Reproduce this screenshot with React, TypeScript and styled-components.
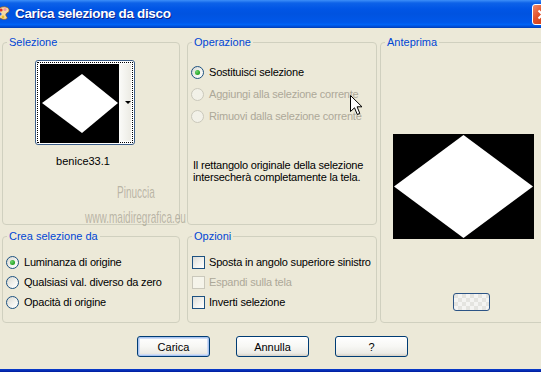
import React from "react";
import styled, { createGlobalStyle } from "styled-components";

const GlobalStyle = createGlobalStyle`
  html, body {
    margin: 0;
    padding: 0;
    background: #ece9d8;
  }
  body {
    font-family: "Liberation Sans", Arial, sans-serif;
    font-size: 11px;
    color: #000;
  }
`;

// finestra XP
const Window = styled.div`
  width: 541px;
  height: 372px;
  overflow: hidden;
  position: relative;
  background: #ece9d8;
  display: flex;
  flex-direction: column;
`;

const TitleBar = styled.div`
  height: 28px;
  flex: none;
  display: flex;
  align-items: center;
  background: linear-gradient(
    to bottom,
    #3d8ff8 0px,
    #0d62e8 3px,
    #0055e5 9px,
    #0053e0 50%,
    #0058ea 80%,
    #0063f5 88%,
    #0050dc 94%,
    #003eb4 100%
  );
`;

const TitleIcon = styled.svg`
  margin-left: -5px;
  margin-top: -2px;
  flex: none;
`;

const TitleText = styled.div`
  margin-left: 4px;
  color: #fff;
  font-weight: bold;
  font-size: 13.5px;
  letter-spacing: -0.35px;
  text-shadow: 1px 1px 0 #0a1f8a;
  flex: 1;
  margin-top: -1px;
`;

const CloseButton = styled.div`
  width: 21px;
  height: 21px;
  box-sizing: border-box;
  flex: none;
  margin-right: -12px;
  margin-top: 1px;
  border: 1px solid #fff;
  border-radius: 3px;
  background: linear-gradient(135deg, #f08a6a 0%, #e2532c 40%, #c8360f 100%);
  display: flex;
  align-items: center;
  justify-content: center;
`;

const Body = styled.div`
  flex: 1;
  padding: 8px 0 0 2px;
  display: flex;
  flex-direction: column;
`;

const Panels = styled.div`
  display: grid;
  grid-template-columns: 178px 197px 180px;
  grid-template-rows: 189px 93px;
  row-gap: 5px;
`;

const Group = styled.fieldset<{ $inset?: number; $span?: boolean }>`
  margin: 0 0 0 ${(p) => p.$inset ?? 0}px;
  padding: 0;
  border: 1px solid #d0d0bf;
  border-radius: 4px;
  min-width: 0;
  ${(p) => (p.$span ? "grid-row: 1 / span 2; grid-column: 3;" : "")}
`;

const Legend = styled.legend`
  color: #0046d5;
  padding: 0 2px;
  margin-left: 4px;
  line-height: 12px;
  font-size: 11px;
`;

const SelezioneContent = styled.div`
  padding: 12px 0 0 32px;
  display: flex;
  flex-direction: column;
`;

const ThumbPicker = styled.div`
  width: 100px;
  height: 85px;
  box-sizing: border-box;
  border: 1px solid #3b5d88;
  border-radius: 3px;
  padding: 1px;
  background: #fff;
  display: flex;
`;

const FocusRing = styled.div`
  flex: 1;
  border: 1px dotted #000;
  padding: 1px 1px 1px 2px;
  display: flex;
`;

const ArrowStrip = styled.div`
  flex: 1;
  display: flex;
  align-items: center;
  justify-content: center;
  background: linear-gradient(to right, #fbfbf9, #ecebe4);
`;

const DownArrow = styled.span`
  width: 0;
  height: 0;
  border-left: 3px solid transparent;
  border-right: 3px solid transparent;
  border-top: 3px solid #000;
  margin-left: 6px;
`;

const ThumbName = styled.div`
  width: 96px;
  text-align: center;
  margin-top: 10px;
  line-height: 13px;
`;

const OptionList = styled.div<{ $top: number; $left: number }>`
  padding: ${(p) => p.$top}px 0 0 ${(p) => p.$left}px;
  display: flex;
  flex-direction: column;
`;

const OptionRow = styled.div<{ $h: number; $disabled?: boolean; $gap?: number }>`
  height: ${(p) => p.$h}px;
  display: flex;
  align-items: center;
  gap: ${(p) => p.$gap ?? 5}px;
  color: ${(p) => (p.$disabled ? "#aca899" : "#000")};
  white-space: nowrap;
  letter-spacing: -0.2px;
`;

const RadioDot = styled.span<{ $checked?: boolean; $disabled?: boolean }>`
  width: 13px;
  height: 13px;
  box-sizing: border-box;
  border-radius: 50%;
  flex: none;
  border: 1px solid ${(p) => (p.$disabled ? "#cac8bb" : "#1c5180")};
  background: ${(p) =>
    p.$disabled ? "#f2f1e8" : "linear-gradient(135deg, #d8d8d2 0%, #f4f4f0 60%, #ffffff 100%)"};
  display: flex;
  align-items: center;
  justify-content: center;

  &::after {
    content: "";
    display: ${(p) => (p.$checked ? "block" : "none")};
    width: 5px;
    height: 5px;
    border-radius: 50%;
    background: radial-gradient(circle at 35% 35%, #6fd46f, #21a121 70%);
  }
`;

const CheckBox = styled.span<{ $disabled?: boolean }>`
  width: 13px;
  height: 13px;
  box-sizing: border-box;
  flex: none;
  border: 1px solid ${(p) => (p.$disabled ? "#cac8bb" : "#1c5180")};
  background: ${(p) =>
    p.$disabled ? "#f5f4ea" : "linear-gradient(135deg, #dcdcd7 0%, #f2f2ee 55%, #ffffff 100%)"};
`;

const InfoText = styled.p`
  margin: 32px 0 0 2px;
  line-height: 12px;
  letter-spacing: -0.2px;
`;

const PreviewContent = styled.div`
  padding: 86px 0 0 12px;
  display: flex;
  flex-direction: column;
`;

const PreviewImage = styled.svg`
  display: block;
  background: #000;
`;

const SwatchButton = styled.div`
  width: 37px;
  height: 18px;
  box-sizing: border-box;
  margin: 54px 0 0 60px;
  border: 1px solid #2c5485;
  border-radius: 3px;
  background:
    repeating-conic-gradient(#f4f4f2 0% 25%, #e4e4e0 0% 50%) 0 0 / 8px 8px;
`;

const ButtonRow = styled.div`
  display: flex;
  gap: 26px;
  padding: 13px 0 0 135px;
`;

const PushButton = styled.button<{ $default?: boolean }>`
  width: 73px;
  height: 21px;
  box-sizing: border-box;
  padding: 0;
  border: 1px solid #003c74;
  border-radius: 3px;
  font-family: "Liberation Sans", Arial, sans-serif;
  font-size: 11px;
  color: #000;
  background: linear-gradient(to bottom, #ffffff 0%, #f7f7f4 50%, #ecebe6 85%, #d6d0c5 100%);
  box-shadow: ${(p) =>
    p.$default ? "inset 0 0 0 1px #a9c4f0, inset 0 0 0 2px #cfdcf5" : "none"};
`;

const BottomFrame = styled.div`
  height: 3px;
  flex: none;
  background: linear-gradient(to bottom, #0a3fcf, #001c9c);
`;

const Watermark = styled.div`
  position: absolute;
  color: rgba(140, 136, 120, 0.55);
  font-size: 17px;
  transform-origin: 0 0;
  transform: scaleX(0.59);
  white-space: nowrap;
`;

const Cursor = styled.svg`
  position: absolute;
  left: 350px;
  top: 95px;
`;

const diamond = (w: number, h: number, inset = 0) =>
  `${w / 2},${inset} ${w - inset},${h / 2} ${w / 2},${h - inset} ${inset},${h / 2}`;

export default function App() {
  return (
    <>
      <GlobalStyle />
      <Window>
        <TitleBar>
          <TitleIcon width="16" height="16" viewBox="0 0 16 16">
            <path d="M2 8 C2 3 7 1 11 2 C15 3 15 7 12 8 C10 9 11 11 12 12 C13 14 10 15 7 14 C4 13 2 11 2 8 Z" fill="#f3d9a4" stroke="#8a5a2a" strokeWidth="0.8" />
            <circle cx="6" cy="5" r="1.6" fill="#e03020" />
            <circle cx="10" cy="4.5" r="1.5" fill="#f090b0" />
            <circle cx="5" cy="9" r="1.6" fill="#2060e0" />
            <circle cx="8" cy="12" r="1.4" fill="#e8c020" />
          </TitleIcon>
          <TitleText>Carica selezione da disco</TitleText>
          <CloseButton>
            <svg width="11" height="11" viewBox="0 0 11 11">
              <path d="M1.5 1.5 L9.5 9.5 M9.5 1.5 L1.5 9.5" stroke="#fff" strokeWidth="2" />
            </svg>
          </CloseButton>
        </TitleBar>

        <Body>
          <Panels>
            <Group>
              <Legend>Selezione</Legend>
              <SelezioneContent>
                <ThumbPicker>
                  <FocusRing>
                    <PreviewImage width="79" height="79" viewBox="0 0 79 79">
                      <polygon points="42,10 78,39 42,69 2,39" fill="#fff" />
                    </PreviewImage>
                    <ArrowStrip>
                      <DownArrow />
                    </ArrowStrip>
                  </FocusRing>
                </ThumbPicker>
                <ThumbName>benice33.1</ThumbName>
              </SelezioneContent>
            </Group>

            <Group $inset={7}>
              <Legend>Operazione</Legend>
              <OptionList $top={13} $left={3}>
                <OptionRow $h={22}>
                  <RadioDot $checked />
                  Sostituisci selezione
                </OptionRow>
                <OptionRow $h={22} $disabled>
                  <RadioDot $disabled />
                  Aggiungi alla selezione corrente
                </OptionRow>
                <OptionRow $h={22} $disabled>
                  <RadioDot $disabled />
                  Rimuovi dalla selezione corrente
                </OptionRow>
                <InfoText>
                  Il rettangolo originale della selezione
                  <br />
                  intersecherà completamente la tela.
                </InfoText>
              </OptionList>
            </Group>

            <Group $inset={3} $span>
              <Legend>Anteprima</Legend>
              <PreviewContent>
                <PreviewImage width="141" height="105" viewBox="0 0 141 105">
                  <polygon points={diamond(141, 105, 1)} fill="#fff" />
                </PreviewImage>
                <SwatchButton />
              </PreviewContent>
            </Group>

            <Group>
              <Legend>Crea selezione da</Legend>
              <OptionList $top={10} $left={3}>
                <OptionRow $h={20}>
                  <RadioDot $checked />
                  Luminanza di origine
                </OptionRow>
                <OptionRow $h={20}>
                  <RadioDot />
                  Qualsiasi val. diverso da zero
                </OptionRow>
                <OptionRow $h={20}>
                  <RadioDot />
                  Opacità di origine
                </OptionRow>
              </OptionList>
            </Group>

            <Group $inset={7}>
              <Legend>Opzioni</Legend>
              <OptionList $top={10} $left={4}>
                <OptionRow $h={20} $gap={4}>
                  <CheckBox />
                  Sposta in angolo superiore sinistro
                </OptionRow>
                <OptionRow $h={20} $gap={4} $disabled>
                  <CheckBox $disabled />
                  Espandi sulla tela
                </OptionRow>
                <OptionRow $h={20} $gap={4}>
                  <CheckBox />
                  Inverti selezione
                </OptionRow>
              </OptionList>
            </Group>
          </Panels>

          <ButtonRow>
            <PushButton $default>Carica</PushButton>
            <PushButton>Annulla</PushButton>
            <PushButton>?</PushButton>
          </ButtonRow>
        </Body>

        <BottomFrame />

        <Watermark style={{ left: 117, top: 183 }}>Pinuccia</Watermark>
        <Watermark style={{ left: 85, top: 208 }}>www.maidiregrafica.eu</Watermark>

        <Cursor width="13" height="21" viewBox="0 0 13 21">
          <path d="M0.5 0.5 L0.5 16.5 L4.5 12.8 L7.3 19.5 L9.8 18.4 L7.1 11.8 L12 11.8 Z" fill="#fff" stroke="#000" strokeWidth="1" />
        </Cursor>
      </Window>
    </>
  );
}
